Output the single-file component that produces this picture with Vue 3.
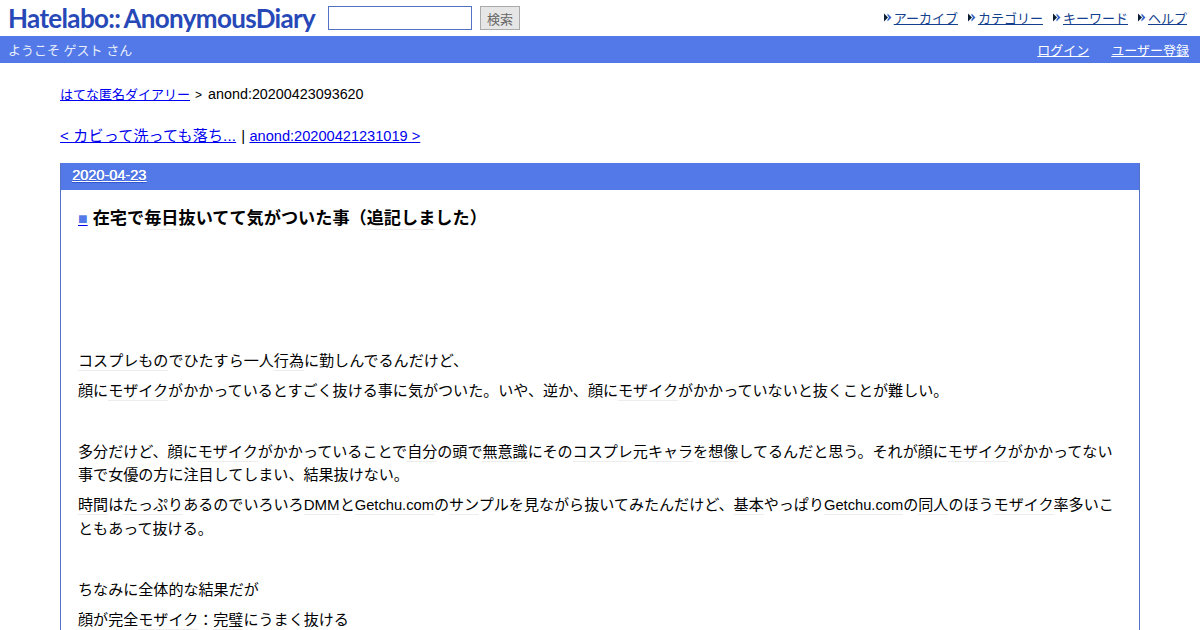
<script setup>
const navItems = ['アーカイブ', 'カテゴリー', 'キーワード', 'ヘルプ']
</script>

<template>
  <div class="page">
    <header class="top">
      <div class="top-left">
        <span class="logo">Hatelabo::<span class="logo-second">AnonymousDiary</span></span>
        <input class="search" type="text" />
        <button class="search-btn">検索</button>
      </div>
      <nav class="nav">
        <span v-for="item in navItems" :key="item" class="nav-item">
          <svg width="8" height="9" viewBox="0 0 8 9" class="arrow">
            <path d="M0 0.5 L4 4.5 L0 8.5 Z" fill="#0d1f33" />
            <path d="M3.5 0.5 L7.5 4.5 L3.5 8.5 L3.5 6.5 L5 4.5 L3.5 2.5 Z" fill="#2f62c8" />
          </svg>
          <a href="#" class="nav-link">{{ item }}</a>
        </span>
      </nav>
    </header>
    <div class="bar">
      <span>ようこそ ゲスト さん</span>
      <span class="bar-links">
        <a href="#">ログイン</a>
        <a href="#">ユーザー登録</a>
      </span>
    </div>
    <main class="main">
      <p class="crumb"><a href="#" class="crumb-link">はてな匿名ダイアリー</a> <span class="gt">&gt;</span> anond:20200423093620</p>
      <p class="pager"><a href="#" class="pager-prev">&lt; カビって洗っても落ち...</a> <span class="pipe">|</span> <a href="#" class="pager-next">anond:20200421231019 &gt;</a></p>
      <section class="day">
        <h2 class="date"><a href="#">2020-04-23</a></h2>
        <div class="body">
          <h3 class="title"><a href="#" class="mark">■</a><span class="title-text">在宅で<a class="kw">毎日</a>抜いてて気がついた事（<a class="kw">追記しま</a>した）</span></h3>
          <div class="spacer"></div>
          <p><a class="kw">コスプレもの</a>でひたすら一人<a class="kw">行為</a>に勤しんでるんだけど、</p>
          <p>顔に<a class="kw">モザイク</a>がかかっているとすごく抜ける事に気がついた。いや、逆か、顔に<a class="kw">モザイク</a>がかかっていないと抜くことが難しい。</p>
          <p class="blank"><br /></p>
          <p>多分だけど、顔に<a class="kw">モザイク</a>がかかっていることで<a class="kw">自分</a>の頭で<a class="kw">無意識</a>にその<a class="kw">コスプレ</a>元<a class="kw">キャラ</a>を<a class="kw">想像</a>してるんだと思う。それが顔に<a class="kw">モザイク</a>がかかってない事で女優の方に注目してしまい、結果抜けない。</p>
          <p><a class="kw">時間</a>は<a class="kw">たっぷり</a>あるのでいろいろ<a class="kw">DMM</a>と<a class="kw latin">Getchu.com</a>の<a class="kw">サン</a>プルを見ながら抜いてみたんだけど、<a class="kw">基本</a>やっぱり<a class="kw latin">Getchu.com</a>の<a class="kw">同人</a>のほう<a class="kw">モザイク</a>率多いこともあって抜ける。</p>
          <p class="blank"><br /></p>
          <p>ちなみに全体的な結果だが</p>
          <p>顔が完全<a class="kw">モザイク</a>：<a class="kw">完璧</a>にうまく抜ける</p>
        </div>
      </section>
    </main>
  </div>
</template>

<style>
html, body { margin: 0; padding: 0; overflow: hidden; background: #fff; }
</style>

<style scoped>
.page {
  width: 1200px;
  height: 630px;
  overflow: hidden;
  font-family: "Liberation Sans", "Noto Sans CJK JP", sans-serif;
  color: #000;
}
.top {
  height: 36px;
  display: flex;
  justify-content: space-between;
  align-items: center;
  padding: 0 13px 0 8px;
}
.top-left { display: flex; align-items: center; }
.logo {
  width: 307px;
  font-family: "Lato", sans-serif;
  font-weight: 700;
  font-size: 26px;
  letter-spacing: -0.65px;
  color: #2748b7;
  white-space: nowrap;
  margin-top: -1px;
}
.logo-second { margin-left: 3px; }
.search {
  box-sizing: border-box;
  width: 144px;
  height: 24px;
  margin: 0 0 0 13px;
  border: 1px solid #5571c4;
  padding: 0;
  background: #fff;
}
.search-btn {
  box-sizing: border-box;
  width: 40px;
  height: 24px;
  margin-left: 8px;
  padding: 0;
  border: 1px solid #aaa;
  background: #e6e6e6;
  color: #666;
  font: 13px "Liberation Sans", "Noto Sans CJK JP", sans-serif;
}
.nav { display: flex; gap: 10px; font-size: 13px; padding-bottom: 2px; }
.nav-item { display: flex; align-items: center; gap: 2px; }
.nav-link { color: #12408c; }
.bar {
  height: 27px;
  background: #5279e7;
  color: #e8eefc;
  font-size: 13px;
  display: flex;
  justify-content: space-between;
  align-items: center;
  padding: 0 11px 1px 8px;
  box-sizing: border-box;
}
.bar-links { display: flex; gap: 22px; }
.bar-links a { color: #fff; }
.main { padding: 0 60px; }
.crumb {
  margin: 0;
  padding-top: 22px;
  height: 20px;
  line-height: 18px;
  font-size: 14.35px;
}
.crumb-link { font-size: 13px; color: #00e; }
.gt { font-size: 12px; margin: 0 2px 0 1px; }
.pager {
  margin: 0;
  padding-top: 19px;
  font-size: 15px;
  line-height: 23px;
}
.pager a { color: #00e; }
.pager-prev { letter-spacing: 0.2px; }
.pipe { margin-left: 1px; }
.pager-next { font-size: 14.6px; }
.day {
  margin-top: 15px;
  border: 1px solid #5571c4;
  border-top: 0;
}
.date {
  margin: 0;
  height: 27px;
  line-height: 24px;
  background: #5279e7;
  padding-left: 11px;
  font-size: 14.5px;
  font-weight: 400;
  text-shadow: 0.4px 0 0 #fff, 0 1px 0 rgba(30, 60, 190, 0.6);
}
.date a { color: #fff; }
.body {
  padding: 16px 20px 0 17px;
  font-size: 15.07px;
  line-height: 23.2px;
}
.title {
  margin: 0;
  font-size: 17.17px;
  line-height: 24px;
  font-weight: 700;
}
.title-text { margin-left: 5px; }
.mark { color: #5279e7; font-size: 16px; font-weight: 400; text-decoration-color: #00e; font-family: "Liberation Sans", sans-serif; }
.spacer { height: 118px; }
.body p { margin: 0 0 7px; }
.kw { border-bottom: 1px solid #ededed; padding-bottom: 1px; }
.latin { font-size: 14.7px; }
</style>
